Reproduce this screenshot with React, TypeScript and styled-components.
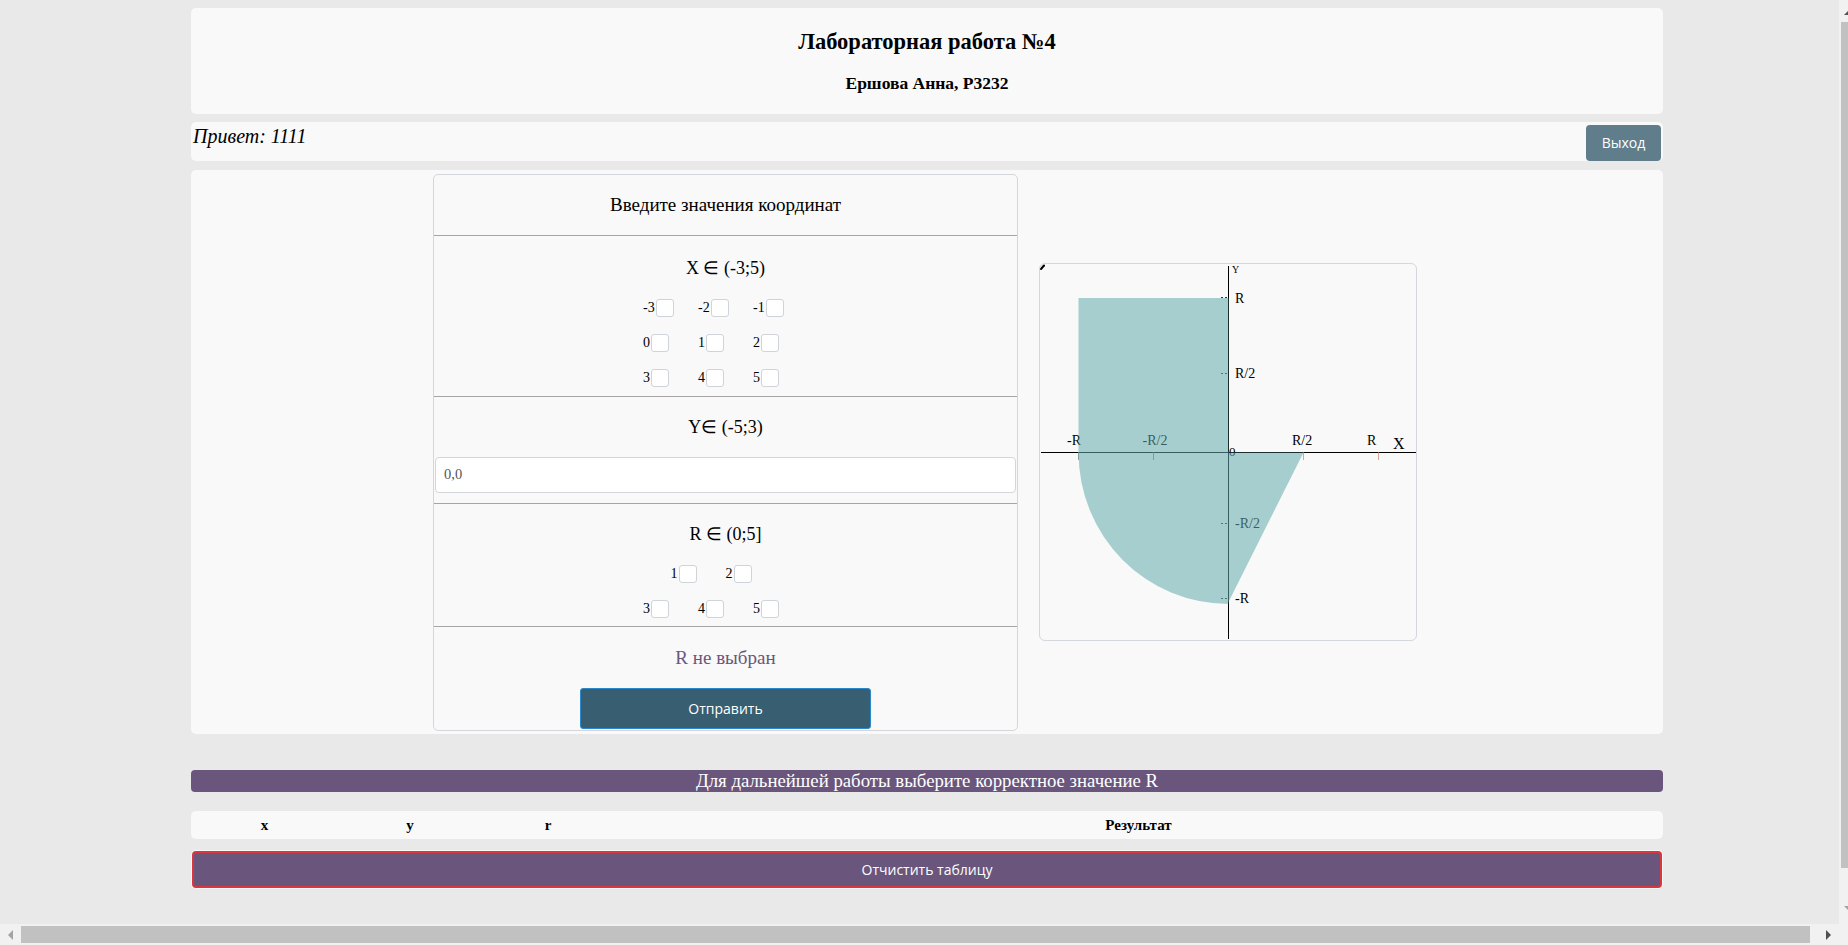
import React from "react";
import styled, { createGlobalStyle } from "styled-components";

const GlobalStyle = createGlobalStyle`
  html, body {
    margin: 0;
    background: #e9e9e9;
    font-family: "Liberation Serif", "Times New Roman", serif;
    color: #000;
  }
`;

const xRows = [
  ["-3", "-2", "-1"],
  ["0", "1", "2"],
  ["3", "4", "5"],
];
const rRows = [
  ["1", "2"],
  ["3", "4", "5"],
];

const Graph = () => {
  const o = 188.5;
  return (
    <GraphBox width={376} height={376}>
      <path d="M1 5 L4 1.5" stroke="#000" strokeWidth={2} strokeLinecap="round" />
      <line x1={1} y1={o} x2={376} y2={o} stroke="#000" />
      <line x1={o} y1={2} x2={o} y2={375} stroke="#000" />
      {[38.5, 113.5, 263.5, 338.5].map((x, i) => (
        <line key={x} x1={x} y1={o} x2={x} y2={196} stroke={i > 1 ? "#d9a493" : "#8a9a9a"} />
      ))}
      {[33.5, 109.5, 259.5, 334.5].map((y) => (
        <line key={y} x1={181} y1={y} x2={188} y2={y} stroke="#333" strokeDasharray="2 2" />
      ))}
      <AxisText x={195} y={39}>R</AxisText>
      <AxisText x={195} y={114}>R/2</AxisText>
      <AxisText x={195} y={264}>-R/2</AxisText>
      <AxisText x={195} y={339}>-R</AxisText>
      <AxisText x={27} y={181}>-R</AxisText>
      <AxisText x={102.5} y={181}>-R/2</AxisText>
      <AxisText x={252} y={181}>R/2</AxisText>
      <AxisText x={327} y={181}>R</AxisText>
      <AxisText x={353} y={185} $size={16}>X</AxisText>
      <AxisText x={189} y={192} $size={13}>0</AxisText>
      <AxisText x={192} y={8.5} $size={10}>Y</AxisText>
      <path
        d={`M38.5 ${o} L38.5 34 L${o} 34 L${o} ${o} L263.5 ${o} L${o} 338 L${o} 340 A150 151.5 0 0 1 38.5 ${o} Z`}
        fill="#62abab"
        fillOpacity={0.55}
      />
    </GraphBox>
  );
};

const CheckRows = ({ rows }: { rows: string[][] }) => (
  <Rows>
    {rows.map((row, i) => (
      <Row key={i}>
        {row.map((v) => (
          <Cell key={v}>
            {v}
            <Check type="checkbox" />
          </Cell>
        ))}
      </Row>
    ))}
  </Rows>
);

export default function App() {
  return (
    <>
      <GlobalStyle />
      <Page>
        <Header>
          <Title>Лабораторная работа №4</Title>
          <Subtitle>Ершова Анна, P3232</Subtitle>
        </Header>

        <UserBar>
          <Greeting>Привет: 1111</Greeting>
          <ExitButton>Выход</ExitButton>
        </UserBar>

        <Main>
          <FormCard>
            <Section $top={20} $bottom={20}>
              <Label $size={19}>Введите значения координат</Label>
            </Section>
            <Section $top={22} $bottom={9}>
              <Label>X ∈ (-3;5)</Label>
              <CheckRows rows={xRows} />
            </Section>
            <Section $top={20} $bottom={10}>
              <Label>Y∈ (-5;3)</Label>
              <YInput defaultValue="0,0" />
            </Section>
            <Section $top={20} $bottom={8}>
              <Label>R ∈ (0;5]</Label>
              <CheckRows rows={rRows} />
            </Section>
            <Section $top={21} $bottom={1} $last>
              <Label $warn $size={19}>R не выбран</Label>
              <SendButton>Отправить</SendButton>
            </Section>
          </FormCard>
          <Graph />
        </Main>

        <Notice>Для дальнейшей работы выберите корректное значение R</Notice>

        <ResultTable>
          <thead>
            <tr>
              <Th $w={147}>x</Th>
              <Th $w={144}>y</Th>
              <Th $w={132}>r</Th>
              <Th>Результат</Th>
            </tr>
          </thead>
        </ResultTable>

        <ClearWrap>
          <ClearButton>Отчистить таблицу</ClearButton>
        </ClearWrap>
      </Page>

      <VScroll>
        <UpArrow />
        <VThumb />
        <DownArrow />
      </VScroll>
      <HScroll>
        <ArrowCell>
          <LeftArrow />
        </ArrowCell>
        <HThumb />
        <ArrowCell $end>
          <RightArrow />
        </ArrowCell>
      </HScroll>
    </>
  );
}

const Page = styled.div`
  width: 1472px;
  margin-left: 191px;
  padding-top: 8px;
  display: flex;
  flex-direction: column;
`;

const Panel = styled.div`
  background: #f9f9f9;
  border-radius: 5px;
`;

const Header = styled(Panel)`
  height: 106px;
  box-sizing: border-box;
  padding-top: 20px;
  display: flex;
  flex-direction: column;
  align-items: center;
  gap: 18px;
`;

const Title = styled.h2`
  margin: 0;
  font-size: 22.5px;
  line-height: 28px;
  font-weight: bold;
`;

const Subtitle = styled.h4`
  margin: 0;
  font-size: 17.5px;
  line-height: 19px;
  font-weight: bold;
`;

const UserBar = styled(Panel)`
  margin-top: 8px;
  height: 39px;
  display: flex;
  justify-content: space-between;
  align-items: flex-start;
`;

const Greeting = styled.i`
  font-size: 20px;
  line-height: 23px;
  padding: 3px 0 0 2px;
`;

const ExitButton = styled.button`
  margin: 2.5px 2px 0 0;
  width: 75px;
  height: 36px;
  border: none;
  border-radius: 4px;
  background: #607d8b;
  color: #fff;
  font-family: "Open Sans", sans-serif;
  font-size: 14px;
`;

const Main = styled(Panel)`
  margin-top: 9px;
  height: 564px;
  box-sizing: border-box;
  padding-right: 4px;
  display: flex;
  justify-content: center;
  align-items: center;
  gap: 21px;
`;

const FormCard = styled.div`
  width: 585px;
  box-sizing: border-box;
  border: 1px solid #d3d6db;
  border-radius: 5px;
  display: flex;
  flex-direction: column;
`;

const Section = styled.div<{ $top: number; $bottom: number; $last?: boolean }>`
  padding: ${(p) => p.$top}px 0 ${(p) => p.$bottom}px;
  display: flex;
  flex-direction: column;
  align-items: center;
  gap: 20px;
  border-bottom: ${(p) => (p.$last ? "none" : "1px solid #a5a5a5")};
`;

const Label = styled.div<{ $warn?: boolean; $size?: number }>`
  font-size: ${(p) => p.$size ?? 18}px;
  line-height: 20px;
  color: ${(p) => (p.$warn ? "#6a567d" : "#000")};
`;

const Rows = styled.div`
  display: flex;
  flex-direction: column;
  gap: 17px;
  margin-top: 1px;
`;

const Row = styled.div`
  display: flex;
  justify-content: center;
`;

const Cell = styled.label`
  width: 55px;
  display: flex;
  align-items: center;
  font-size: 14px;
  line-height: 18px;
`;

const Check = styled.input`
  appearance: none;
  width: 18px;
  height: 18px;
  margin: 0 0 0 1px;
  box-sizing: border-box;
  background: #fff;
  border: 1px solid #cfd3da;
  border-radius: 3px;
`;

const YInput = styled.input`
  align-self: stretch;
  height: 36px;
  margin: 0 1px;
  box-sizing: border-box;
  border: 1px solid #d3d6db;
  border-radius: 4px;
  background: #fff;
  padding: 0 8px;
  font-family: "Liberation Serif", serif;
  font-size: 14.5px;
  color: #555;
  outline: none;
`;

const SendButton = styled.button`
  width: 291px;
  height: 41px;
  border: 1px solid #2d88c9;
  border-radius: 3px;
  background: #385e72;
  color: #fff;
  font-family: "Open Sans", sans-serif;
  font-size: 14px;
`;

const GraphBox = styled.svg`
  border: 1px solid #d3d6db;
  border-radius: 6px;
  background: #f9f9f9;
`;

const AxisText = styled.text<{ $size?: number }>`
  font-family: "Liberation Serif", serif;
  font-size: ${(p) => p.$size ?? 14}px;
  fill: #000;
`;

const Notice = styled.div`
  margin-top: 36px;
  height: 22px;
  border-radius: 4px;
  background: #6a567d;
  color: #fff;
  font-size: 18.8px;
  line-height: 22px;
  text-align: center;
`;

const ResultTable = styled.table`
  margin-top: 19px;
  width: 100%;
  border-spacing: 0;
  background: #f9f9f9;
  border-radius: 5px;
`;

const Th = styled.th<{ $w?: number }>`
  width: ${(p) => (p.$w ? `${p.$w}px` : "auto")};
  padding: 5px 0;
  font-size: 15px;
  line-height: 18px;
  font-weight: bold;
`;

const ClearWrap = styled(Panel)`
  margin-top: 11px;
  padding: 1px;
  display: flex;
`;

const ClearButton = styled.button`
  flex: 1;
  height: 37px;
  border: 2px solid #d9363e;
  border-radius: 4px;
  background: #6a567d;
  color: #fff;
  font-family: "Open Sans", sans-serif;
  font-size: 14px;
`;

const VScroll = styled.div`
  position: fixed;
  top: 0;
  right: 0;
  width: 9px;
  height: 924px;
  background: #f1f1f1;
  display: flex;
  flex-direction: column;
`;

const UpArrow = styled.div`
  margin: 10px 0 0 5px;
  width: 0;
  height: 0;
  border-left: 5px solid transparent;
  border-right: 5px solid transparent;
  border-bottom: 5px solid #505050;
`;

const VThumb = styled.div`
  margin: 7px 0 0 2px;
  height: 846px;
  background: #c1c1c1;
`;

const DownArrow = styled.div`
  margin: 38px 0 0 5px;
  width: 0;
  height: 0;
  border-left: 5px solid transparent;
  border-right: 5px solid transparent;
  border-top: 5px solid #a3a3a3;
`;

const HScroll = styled.div`
  position: fixed;
  left: 0;
  bottom: 0;
  width: 100%;
  height: 21px;
  background: #f1f1f1;
  display: flex;
  align-items: center;
`;

const ArrowCell = styled.div<{ $end?: boolean }>`
  width: 21px;
  height: 21px;
  display: flex;
  align-items: center;
  justify-content: center;
  margin-left: ${(p) => (p.$end ? "8px" : "0")};
`;

const LeftArrow = styled.div`
  width: 0;
  height: 0;
  border-top: 5px solid transparent;
  border-bottom: 5px solid transparent;
  border-right: 5px solid #a3a3a3;
`;

const RightArrow = styled.div`
  width: 0;
  height: 0;
  border-top: 5px solid transparent;
  border-bottom: 5px solid transparent;
  border-left: 5px solid #505050;
`;

const HThumb = styled.div`
  width: 1789px;
  height: 17px;
  background: #c1c1c1;
`;
